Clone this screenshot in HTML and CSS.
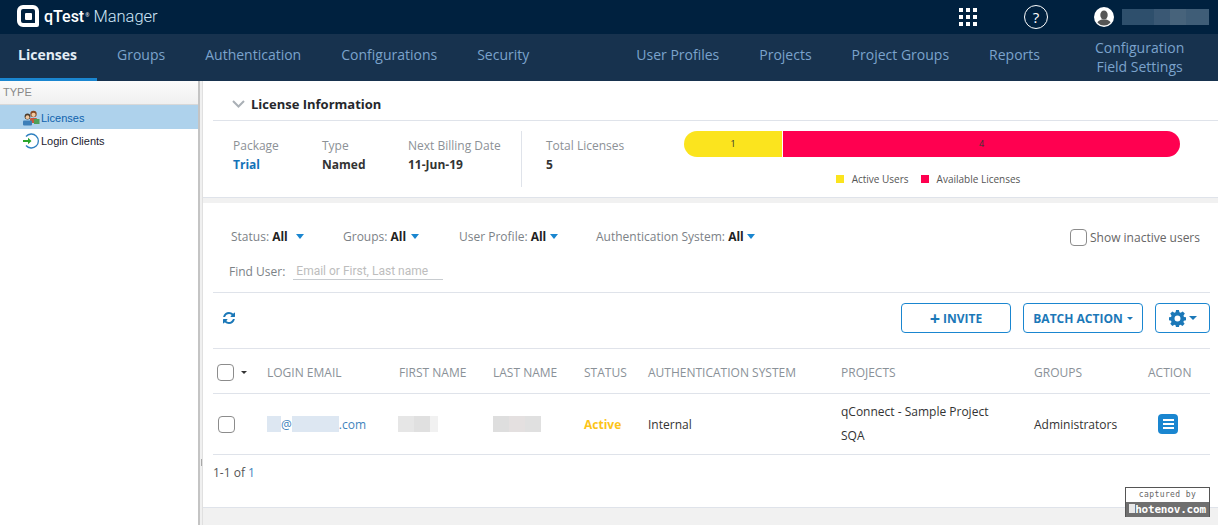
FILE: index.html
```html
<!DOCTYPE html>
<html lang="en">
<head>
    <meta charset="UTF-8">
    <title>qTest Manager - Licenses</title>
    <link rel="stylesheet" href="styles.css">
</head>
<body>
    <header class="topbar">
        <div class="brand">
            <span class="logo"><span class="logo-dot"></span></span>
            <span class="brand-q">qTest</span><span class="brand-tm">&reg;</span>
            <span class="brand-name">Manager</span>
        </div>
        <div class="top-tools">
            <svg class="apps-icon" width="18" height="18" viewBox="0 0 18 18" fill="#fff">
                <rect x="0" y="0" width="4" height="4"/><rect x="7" y="0" width="4" height="4"/><rect x="14" y="0" width="4" height="4"/>
                <rect x="0" y="7" width="4" height="4"/><rect x="7" y="7" width="4" height="4"/><rect x="14" y="7" width="4" height="4"/>
                <rect x="0" y="14" width="4" height="4"/><rect x="7" y="14" width="4" height="4"/><rect x="14" y="14" width="4" height="4"/>
            </svg>
            <span class="help-icon">?</span>
            <svg class="user-icon" width="20" height="20" viewBox="0 0 20 20">
                <circle cx="10" cy="10" r="10" fill="#fff"/>
                <clipPath id="avatar"><circle cx="10" cy="10" r="8.6"/></clipPath>
                <g clip-path="url(#avatar)" fill="#555">
                    <ellipse cx="10" cy="8" rx="3.7" ry="4.6"/>
                    <path d="M2 20c0-5 3-6.500 6-7.500h4c3 1 6 2.500 6 7.500z"/>
                </g>
            </svg>
            <span class="user-name"></span>
        </div>
    </header>

    <nav class="mainnav">
        <a class="nav-item nav-active">Licenses</a>
        <a class="nav-item">Groups</a>
        <a class="nav-item">Authentication</a>
        <a class="nav-item">Configurations</a>
        <a class="nav-item">Security</a>
        <span class="nav-spacer"></span>
        <a class="nav-item">User Profiles</a>
        <a class="nav-item">Projects</a>
        <a class="nav-item">Project Groups</a>
        <a class="nav-item">Reports</a>
        <a class="nav-item nav-double">Configuration<br>Field Settings</a>
    </nav>

    <div class="layout">
        <aside class="sidebar">
            <div class="side-head">TYPE</div>
            <div class="side-row side-selected">
                <svg width="18" height="16" viewBox="0 0 18 16">
                    <circle cx="11.500" cy="4" r="3.200" fill="#8a4a22"/>
                    <circle cx="11.500" cy="4.800" r="2.100" fill="#f2c9a0"/>
                    <rect x="8" y="8" width="7" height="5" rx="1" fill="#c9573c"/>
                    <rect x="12" y="9" width="5.500" height="5" fill="#4fa05a"/>
                    <circle cx="5.500" cy="6.500" r="2.900" fill="#4a3a2a"/>
                    <circle cx="5.500" cy="7.200" r="1.900" fill="#f2c9a0"/>
                    <rect x="1" y="10.500" width="9" height="5" rx="1" fill="#3d7fb8"/>
                </svg>
                <span>Licenses</span>
            </div>
            <div class="side-row side-plain">
                <svg width="18" height="16" viewBox="0 0 18 16">
                    <path d="M4 3.500A7 7 0 1 1 4 12.500" fill="none" stroke="#2d7fc0" stroke-width="1.300"/>
                    <path d="M1 7h5V4.800L9.500 8 6 11.200V9H1z" fill="#2aa52a"/>
                </svg>
                <span>Login Clients</span>
            </div>
        </aside>
        <div class="splitter"><span class="grip"></span></div>

        <main class="content">
            <section class="license-info">
                <h2 class="info-title">
                    <svg width="13" height="8" viewBox="0 0 13 8"><path d="M1 1l5.500 5.500L12 1" fill="none" stroke="#aab0b6" stroke-width="2"/></svg>
                    License Information
                </h2>
                <div class="info-body">
                    <div class="stat stat-package"><span class="stat-label">Package</span><b class="stat-link">Trial</b></div>
                    <div class="stat stat-type"><span class="stat-label">Type</span><b>Named</b></div>
                    <div class="stat stat-date"><span class="stat-label">Next Billing Date</span><b>11-Jun-19</b></div>
                    <div class="stat stat-total"><span class="stat-label">Total Licenses</span><b>5</b></div>
                    <div class="chart">
                        <div class="bar">
                            <span class="bar-active">1</span>
                            <span class="bar-free">4</span>
                        </div>
                        <div class="legend">
                            <span class="swatch swatch-yellow"></span><span class="legend-text">Active Users</span>
                            <span class="swatch swatch-red"></span><span>Available Licenses</span>
                        </div>
                    </div>
                </div>
            </section>

            <section class="users">
                <div class="filters">
                    <div class="filter-row">
                        <span class="filter f-status">Status: <b>All</b><i class="caret caret-status"></i></span>
                        <span class="filter f-groups">Groups: <b>All</b><i class="caret caret-groups"></i></span>
                        <span class="filter f-profile">User Profile: <b>All</b><i class="caret"></i></span>
                        <span class="filter">Authentication System: <b>All</b><i class="caret caret-auth"></i></span>
                        <label class="inactive"><span class="check"></span>Show inactive users</label>
                    </div>
                    <div class="find-row">
                        <span>Find User:</span>
                        <span class="find-input">Email or First, Last name</span>
                    </div>
                </div>

                <div class="toolbar">
                    <svg class="refresh" width="12" height="12" viewBox="0 0 1536 1536" fill="#1b78b8">
                        <path d="M1511 928q0 5-1 7-64 268-268 434.500T764 1536q-146 0-282.500-55T238 1324l-129 129q-19 19-45 19t-45-19-19-45V960q0-26 19-45t45-19h448q26 0 45 19t19 45-19 45l-137 137q71 66 161 102t187 36q134 0 250-65t186-179q11-17 53-117 8-23 30-23h192q13 0 22.500 9.500t9.500 22.500zM1536 128v448q0 26-19 45t-45 19h-448q-26 0-45-19t-19-45 19-45l138-138Q969 256 768 256q-134 0-250 65T332 500q-11 17-53 117-8 23-30 23H50q-13 0-22.500-9.500T18 608v-7q65-268 270-434.500T768 0q146 0 284 55.500T1297 212l130-129q19-19 45-19t45 19 19 45z"/>
                    </svg>
                    <span class="toolbar-gap"></span>
                    <button class="btn btn-invite"><span class="plus">+</span> INVITE</button>
                    <button class="btn btn-batch">BATCH ACTION<i class="caret caret-small"></i></button>
                    <button class="btn btn-gear">
                        <svg width="17" height="17" viewBox="0 0 16 16" fill="#1b78b8">
                            <path fill-rule="evenodd" d="M6.600 0h2.800l.4 2.200 1.200.5L12.900 1.400l2 2-1.300 1.900.5 1.200 1.900.3v2.800l-2 .4-.5 1.200 1.200 1.800-2 2-1.800-1.200-1.200.5-.4 2.100H6.600l-.4-2.100-1.200-.5-1.800 1.200-2-2 1.200-1.800-.5-1.200L0 9.700V6.900l1.900-.4.500-1.200L1.200 3.400l2-2L5 2.700l1.200-.5zM8 5.200a2.800 2.800 0 1 0 0 5.600 2.800 2.800 0 0 0 0-5.600z"/>
                        </svg>
                        <i class="caret caret-gear"></i>
                    </button>
                </div>

                <div class="grid grid-head">
                    <div class="cell-check"><span class="check"></span><i class="caret caret-dark"></i></div>
                    <div>LOGIN EMAIL</div>
                    <div>FIRST NAME</div>
                    <div>LAST NAME</div>
                    <div>STATUS</div>
                    <div>AUTHENTICATION SYSTEM</div>
                    <div>PROJECTS</div>
                    <div>GROUPS</div>
                    <div>ACTION</div>
                </div>
                <div class="grid grid-row">
                    <div class="cell-check cell-check-row"><span class="check"></span></div>
                    <div class="email"><span class="blur-blue blur-a"></span>@<span class="blur-blue blur-b"></span>.com</div>
                    <div><span class="blur-grey blur-first"></span></div>
                    <div><span class="blur-grey blur-last"></span></div>
                    <div class="status-active">Active</div>
                    <div>Internal</div>
                    <div class="projects">qConnect - Sample Project<br>SQA</div>
                    <div>Administrators</div>
                    <div class="action-cell">
                        <span class="menu-btn"><span></span><span></span><span></span></span>
                    </div>
                </div>
                <div class="pager">1-1 of <span class="pager-link">1</span></div>
            </section>
            <div class="footer-band"></div>
        </main>
    </div>

    <div class="stamp">
        <div class="stamp-top">captured by</div>
        <div class="stamp-bottom"><span class="stamp-box"></span>hotenov.com</div>
    </div>
</body>
</html>
```

FILE: styles.css
```css
* {
    box-sizing: border-box;
}

html, body {
    margin: 0;
    height: 525px;
    overflow: hidden;
}

body {
    font-family: "Open Sans", sans-serif;
    font-size: 12px;
    color: #333;
    background: #fff;
}

/* top bar */
.topbar {
    height: 34px;
    background: #00213f;
    display: flex;
    align-items: center;
    justify-content: space-between;
    color: #fff;
}

.brand {
    display: flex;
    align-items: center;
    padding: 0 0 2px 17px;
}

.logo {
    width: 22px;
    height: 22px;
    border: 4px solid #fff;
    border-radius: 6px 6px 2px 6px;
    display: flex;
    align-items: center;
    justify-content: center;
    margin-right: 5px;
}

.logo-dot {
    width: 7px;
    height: 7px;
    background: #fff;
    border-radius: 1px;
}

.brand-q {
    font-family: Roboto, sans-serif;
    font-weight: 500;
    font-size: 16px;
    margin-top: 1px;
}

.brand-tm {
    font-size: 5px;
    align-self: flex-start;
    margin: 7px 4px 0 1px;
}

.brand-name {
    font-family: Roboto, sans-serif;
    font-weight: 300;
    font-size: 16.500px;
    color: #cfe6f7;
}

.top-tools {
    display: flex;
    align-items: center;
    padding-right: 9px;
}

.apps-icon {
    margin-right: 47px;
}

.help-icon {
    width: 24px;
    height: 24px;
    border: 1.500px solid #fff;
    border-radius: 50%;
    display: flex;
    align-items: center;
    justify-content: center;
    font-size: 15px;
    margin-right: 46px;
}

.user-icon {
    margin-right: 8px;
}

.user-name {
    width: 87px;
    height: 16px;
    background: linear-gradient(90deg, #2e4f6c 0 32px, #3a5874 32px 48px, #47637b 48px 64px, #3f5d77 64px);
}

/* main navigation */
.mainnav {
    height: 47px;
    background: #17324e;
    display: flex;
    padding-left: 18px;
    font-size: 14px;
    color: #7ba3cc;
}

.nav-item {
    display: flex;
    align-items: center;
    padding-bottom: 7px;
    margin-right: 40px;
    white-space: nowrap;
}

.nav-active {
    color: #e4edf5;
    font-weight: 700;
    position: relative;
}

.nav-active::after {
    content: "";
    position: absolute;
    left: -18px;
    right: -20px;
    bottom: 0;
    height: 3px;
    background: #1a86d0;
}

.nav-spacer {
    width: 67px;
}

.nav-double {
    margin: 0 0 0 15px;
    padding: 0 0 2px;
    text-align: center;
    line-height: 19px;
}

/* sidebar + content */
.layout {
    display: flex;
    height: 444px;
}

.sidebar {
    width: 198px;
    font-family: "Liberation Sans", sans-serif;
    font-size: 11px;
    color: #1c2330;
}

.side-head {
    height: 24px;
    padding: 5px 0 0 3px;
    color: #888;
    background: linear-gradient(#fbfbfb, #f0f0f0);
    border-bottom: 1px solid #d8d8d8;
}

.side-row {
    height: 24px;
    display: flex;
    align-items: center;
    padding: 2px 0 0 22px;
    gap: 1px;
}

.side-plain {
    padding-top: 0;
}

.side-selected {
    background: #aed2ec;
    color: #0f62ac;
}

.splitter {
    width: 5px;
    border-left: 2px solid #c4c4c4;
    border-right: 1px solid #e0e0e0;
    background: #f0f0f0;
    display: flex;
    justify-content: center;
    padding-top: 378px;
}

.grip {
    width: 1px;
    height: 7px;
    background: #a8a8a8;
}

.content {
    flex: 1;
    display: flex;
    flex-direction: column;
}

/* license block */
.license-info {
    height: 117px;
    border-bottom: 1px solid #dfe3ea;
}

.info-title {
    margin: 0 0 0 10px;
    height: 40px;
    padding: 7px 0 0 19px;
    border-bottom: 1px solid #dfe3ea;
    font-size: 13px;
    font-weight: 700;
    color: #26282c;
    display: flex;
    align-items: center;
    gap: 6px;
}

.info-body {
    display: flex;
    padding: 10px 0 0 30px;
}

.stat {
    display: flex;
    flex-direction: column;
    height: 56px;
    font-size: 12px;
    line-height: 19px;
    color: #333;
    padding-top: 5px;
}

.stat-label {
    color: #8c9196;
}

.stat-link {
    color: #1372b8;
}

.stat-package {
    width: 89px;
}

.stat-type {
    width: 86px;
}

.stat-date {
    width: 114px;
    border-right: 1px solid #dfe3ea;
}

.stat-total {
    width: 138px;
    margin-left: 24px;
}

.chart {
    width: 496px;
}

.bar {
    height: 26px;
    display: flex;
    font-size: 9px;
    line-height: 26px;
    text-align: center;
    color: #333;
}

.bar-active {
    width: 98px;
    background: #fbe41e;
    border-radius: 13px 0 0 13px;
    margin-right: 1px;
}

.bar-free {
    flex: 1;
    background: #ff0050;
    border-radius: 0 13px 13px 0;
}

.legend {
    display: flex;
    justify-content: center;
    align-items: center;
    margin-top: 15px;
    padding-right: 8px;
    font-size: 10px;
    line-height: 14px;
    color: #555;
}

.swatch {
    width: 8px;
    height: 8px;
    margin-right: 8px;
}

.swatch-yellow {
    background: #fbe41e;
}

.swatch-red {
    background: #ff0050;
}

.legend-text {
    margin-right: 12px;
}

/* users block */
.users {
    border-top: 5px solid #f1f1f1;
    padding: 0 8px 0 10px;
    height: 309px;
}

.filters {
    height: 90px;
    padding: 23px 0 0 18px;
    border-bottom: 1px solid #dfe3ea;
    color: #7c8287;
}

.filter-row {
    display: flex;
    align-items: center;
    height: 20px;
}

.filter b {
    color: #222;
}

.f-status {
    width: 112px;
}

.f-groups {
    width: 116px;
}

.f-profile {
    width: 137px;
}

.caret {
    display: inline-block;
    border: 4.500px solid transparent;
    border-top: 5px solid #1a86d0;
    border-bottom: 0;
    margin-left: 4px;
    vertical-align: 2px;
}

.caret-status {
    margin-left: 8px;
}

.caret-groups {
    margin-left: 5px;
}

.caret-auth {
    margin-left: 3px;
}

.caret-small {
    border-width: 3.500px;
    border-bottom: 0;
    border-top-color: #1b78b8;
}

.caret-gear {
    border-width: 4px;
    border-bottom: 0;
    border-top-color: #1b78b8;
    margin-left: 3px;
}

.caret-dark {
    border-width: 3.500px;
    border-bottom: 0;
    border-top-color: #333;
    margin-left: 7px;
}

.inactive {
    margin: 2px 10px 0 auto;
    display: flex;
    align-items: center;
    gap: 3px;
    color: #666;
}

.check {
    width: 17px;
    height: 17px;
    border: 1px solid #8c8c8c;
    border-radius: 4px;
    display: inline-block;
    background: #fff;
}

.find-row {
    display: flex;
    align-items: center;
    margin: 16px 0 0 -2px;
    gap: 8px;
}

.find-input {
    width: 150px;
    height: 18px;
    padding: 2px 0 0 3px;
    border-bottom: 1px solid #c8ccd0;
    color: #bdbdbd;
    font-family: Roboto, sans-serif;
}

.toolbar {
    height: 56px;
    display: flex;
    align-items: center;
    padding: 0 0 6px 10px;
    border-bottom: 1px solid #e0e3ea;
}

.toolbar-gap {
    flex: 1;
}

.btn {
    height: 30px;
    border: 1px solid #1a86d0;
    border-radius: 4px;
    background: #fff;
    color: #1b78b8;
    font-family: "Open Sans", sans-serif;
    font-size: 12px;
    font-weight: 700;
    display: flex;
    align-items: center;
    justify-content: center;
    margin-left: 12px;
    padding: 1px 0 0;
}

.btn-invite {
    width: 110px;
}

.plus {
    font-size: 18px;
    line-height: 16px;
    margin-right: 3px;
}

.btn-batch {
    width: 120px;
}

.btn-gear {
    width: 55px;
}

/* table */
.grid {
    display: grid;
    grid-template-columns: 54px 132px 94px 91px 64px 193px 193px 114px 62px;
    align-items: center;
    border-bottom: 1px solid #dfe3ea;
}

.grid-head {
    height: 45px;
    padding-top: 2px;
    color: #8a9198;
}

.grid-row {
    height: 61px;
    color: #333;
}

.cell-check {
    padding-left: 4px;
    display: flex;
    align-items: center;
}

.cell-check-row {
    padding-left: 5px;
}

.email {
    color: #3f84bd;
    display: flex;
    align-items: center;
}

.blur-blue {
    display: inline-block;
    height: 16px;
    background: #dde7f2;
}

.blur-a {
    width: 14px;
}

.blur-b {
    width: 47px;
}

.blur-grey {
    display: block;
    height: 16px;
}

.blur-first {
    width: 40px;
    margin-left: -1px;
    background: linear-gradient(90deg, #e6e6e6 0 16px, #e0e0e0 16px 32px, #f1f1f1 32px);
}

.blur-last {
    width: 48px;
    background: linear-gradient(90deg, #dedede 0 16px, #e4e0e0 16px 32px, #e0e0e0 32px);
}

.status-active {
    color: #fcc419;
    font-weight: 700;
}

.projects {
    line-height: 24px;
}

.action-cell {
    padding-left: 10px;
}

.menu-btn {
    width: 20px;
    height: 20px;
    background: #1a86d0;
    border-radius: 4px;
    display: flex;
    flex-direction: column;
    justify-content: center;
    align-items: center;
    gap: 2px;
}

.menu-btn span {
    width: 11px;
    height: 2px;
    background: #fff;
}

.pager {
    padding-top: 9px;
    color: #555;
}

.pager-link {
    color: #3f84bd;
}

.footer-band {
    flex: 1;
    background: #f1f1f1;
    border-top: 1px solid #dfe3ea;
}

/* screenshot tool stamp */
.stamp {
    position: absolute;
    left: 1125px;
    top: 487px;
    width: 85px;
    height: 30px;
    border: 1px solid #555;
    font-family: "DejaVu Sans Mono", monospace;
    text-align: center;
}

.stamp-top {
    height: 14px;
    background: #fff;
    font-size: 8px;
    line-height: 13px;
    letter-spacing: 0.4px;
    color: #666;
}

.stamp-bottom {
    height: 15px;
    background: #6f6f6f;
    color: #fff;
    font-size: 11px;
    font-weight: 700;
    line-height: 15px;
    white-space: nowrap;
    letter-spacing: -0.2px;
}

.stamp-box {
    display: inline-block;
    width: 6px;
    height: 9px;
    background: #e8e8e8;
}
```
